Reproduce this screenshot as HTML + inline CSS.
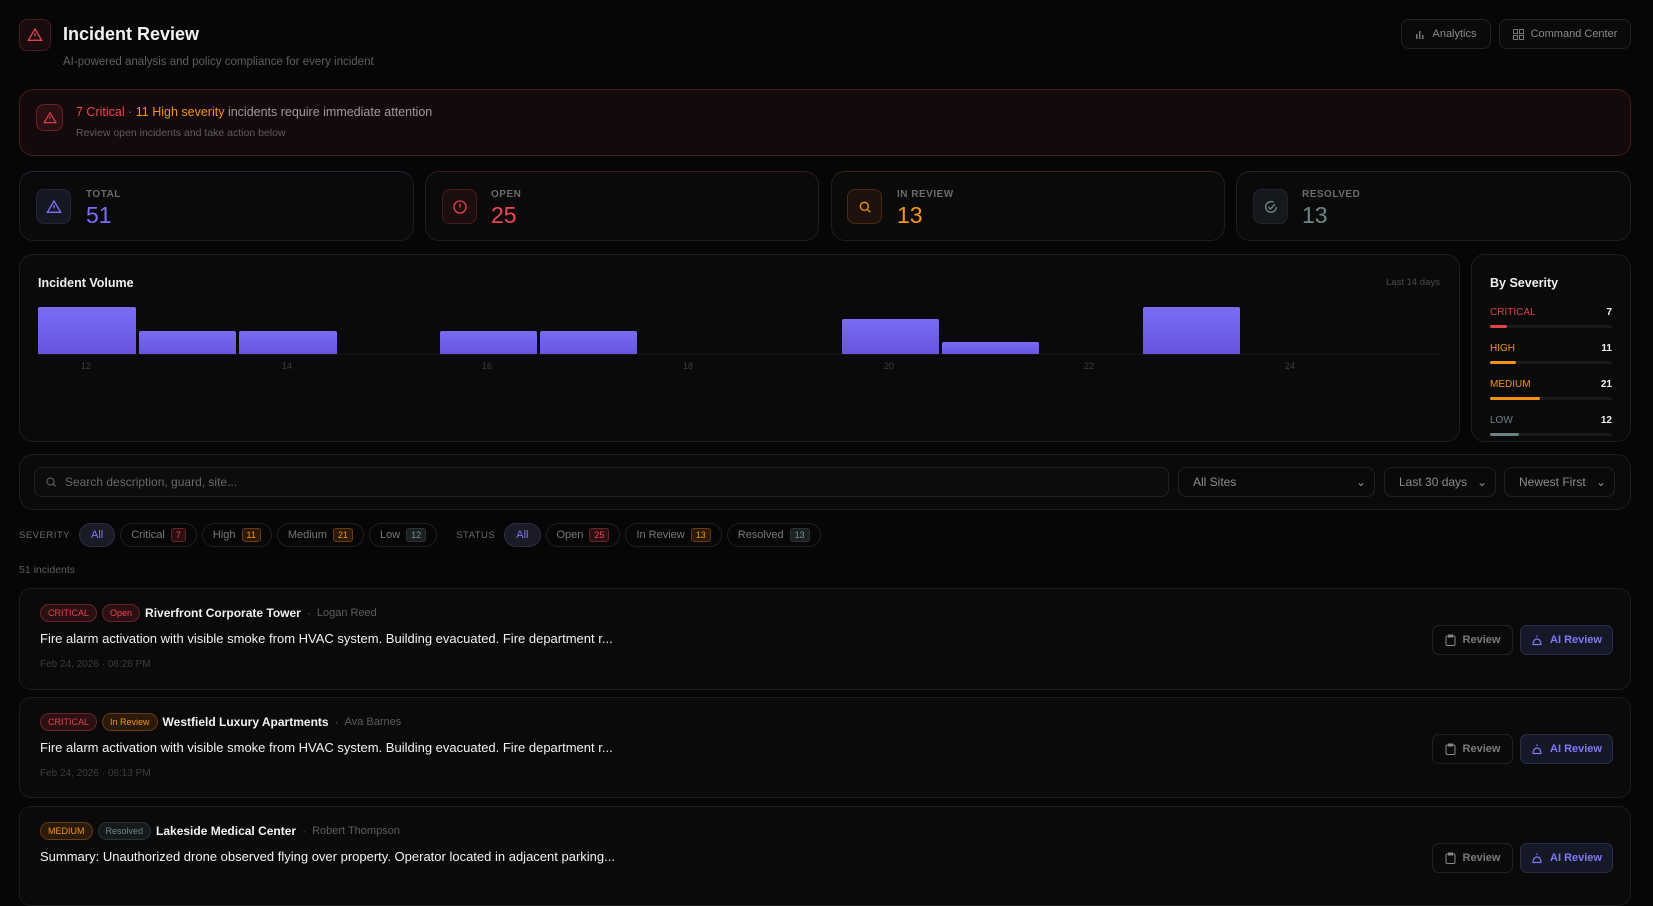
<!DOCTYPE html>
<html><head><meta charset="utf-8"><style>
*{box-sizing:border-box;margin:0;padding:0}
body{width:1653px;height:862px;overflow:hidden;background:#060606;font-family:"Liberation Sans",sans-serif;color:#e5e5e5;position:relative}
.a{position:absolute}
.card{position:absolute;border:1px solid #1e1e20;border-radius:14px;background:#0a0a0b}
.ib{position:absolute;border-radius:8px;display:flex;align-items:center;justify-content:center}
.btn{position:absolute;border:1px solid #222;border-radius:8px;display:flex;align-items:center;justify-content:center;gap:7px;font-size:11px;color:#8a8a8e;background:#0a0a0a}
.lbl{font-size:10px;font-weight:bold;color:#6b6b70;letter-spacing:.5px}
.num{font-size:23px;line-height:24px}
.bar{position:absolute;bottom:0;background:linear-gradient(#7a6cf5,#6655dd);border-radius:2px 2px 0 0}
.chip{display:inline-flex;align-items:center;gap:6px;height:24px;padding:0 10px;border:1px solid #1f1f22;border-radius:12px;font-size:11px;color:#77777c}
.cnt{font-size:9px;padding:1px 4px;border-radius:3px;border:1px solid}
.sel{position:absolute;top:467px;height:30px;border:1px solid #222;border-radius:8px;font-size:12px;color:#8c8c90;display:flex;align-items:center;justify-content:space-between;padding:0 8px 0 14px}
.badge{display:inline-block;font-size:9px;padding:3px 7px;border-radius:10px;border:1px solid;margin-right:5px}
.inc{position:absolute;left:19px;width:1612px;border:1px solid #1c1c1e;border-radius:12px;background:#0a0a0b}
.inc .t{position:absolute;left:20px;top:15px;display:flex;align-items:center;font-size:12px}
.inc .d{position:absolute;left:20px;top:42px;font-size:13px;color:#f2f2f2}
.inc .dt{position:absolute;left:20px;top:70px;font-size:10px;color:#3c3c40}
.rv{position:absolute;top:36px;height:30px;border-radius:7px;display:flex;align-items:center;justify-content:center;gap:7px;font-size:11px;font-weight:bold}
</style></head><body>
<div class="ib" style="left:19px;top:19px;width:32px;height:32px;border:1px solid #4a1a1e;background:#1a0c0e">
<svg width="16" height="16" viewBox="0 0 24 24" fill="none" stroke="#e0434f" stroke-width="2"><path d="M12 3L2 20h20z"/><path d="M12 9v5M12 17v.5"/></svg></div>
<div class="a" style="left:63px;top:24px;font-size:18px;font-weight:bold;color:#f3f3f3">Incident Review</div>
<div class="a" style="left:63px;top:56px;font-size:11.5px;color:#5e5e63">AI-powered analysis and policy compliance for every incident</div>
<div class="btn" style="left:1401px;top:19px;width:90px;height:30px">
<svg width="10" height="10" viewBox="0 0 10 10" fill="#777"><rect x="1" y="5" width="1.5" height="5"/><rect x="4" y="2" width="1.5" height="8"/><rect x="7" y="6" width="1.5" height="4"/></svg>Analytics</div>
<div class="btn" style="left:1499px;top:19px;width:132px;height:30px">
<svg width="11" height="11" viewBox="0 0 11 11" fill="none" stroke="#777"><rect x=".5" y=".5" width="4" height="4"/><rect x="6.5" y=".5" width="4" height="4"/><rect x=".5" y="6.5" width="4" height="4"/><rect x="6.5" y="6.5" width="4" height="4"/></svg>Command Center</div>

<div class="a" style="left:19px;top:89px;width:1612px;height:67px;border:1px solid #4a1a1e;border-radius:14px;background:#140a0b"></div>
<div class="ib" style="left:36px;top:104px;width:27px;height:27px;border:1px solid #6a2228;background:#2a1012">
<svg width="14" height="14" viewBox="0 0 24 24" fill="none" stroke="#e0434f" stroke-width="2"><path d="M12 3L2 20h20z"/><path d="M12 9v5M12 17v.5"/></svg></div>
<div class="a" style="left:76px;top:105px;font-size:12.5px;color:#9a9a9e"><span style="color:#ef4652">7 Critical</span> <span style="color:#777">·</span> <span style="color:#f59312">11 High severity</span> incidents require immediate attention</div>
<div class="a" style="left:76px;top:127px;font-size:10.5px;color:#5c5c60">Review open incidents and take action below</div>

<div class="card" style="left:19px;top:171px;width:395px;height:70px;border-top-color:#26283a"></div>
<div class="ib" style="left:36px;top:189px;width:35px;height:35px;background:#151722;border:1px solid #23263a"><svg width="16" height="16" viewBox="0 0 24 24" fill="none" stroke="#7d6ff5" stroke-width="2"><path d="M12 3L2 20h20z"/><path d="M12 9v5M12 17v.5"/></svg></div>
<div class="a lbl" style="left:86px;top:189px">TOTAL</div><div class="a num" style="left:86px;top:203px;color:#7b6cf6">51</div>
<div class="card" style="left:425px;top:171px;width:394px;height:70px;border-top-color:#3a1a1c"></div>
<div class="ib" style="left:442px;top:189px;width:35px;height:35px;background:#1c0d0f;border:1px solid #4a1a1e"><svg width="16" height="16" viewBox="0 0 24 24" fill="none" stroke="#e0434f" stroke-width="2"><circle cx="12" cy="12" r="9"/><path d="M12 7v6M12 16v.5"/></svg></div>
<div class="a lbl" style="left:491px;top:189px">OPEN</div><div class="a num" style="left:491px;top:203px;color:#ef4652">25</div>
<div class="card" style="left:831px;top:171px;width:394px;height:70px;border-top-color:#3a2314"></div>
<div class="ib" style="left:847px;top:189px;width:35px;height:35px;background:#1c120b;border:1px solid #4a2a14"><svg width="16" height="16" viewBox="0 0 24 24" fill="none" stroke="#f59312" stroke-width="2"><circle cx="11" cy="11" r="6"/><path d="M16 16l4 4"/></svg></div>
<div class="a lbl" style="left:897px;top:189px">IN REVIEW</div><div class="a num" style="left:897px;top:203px;color:#f59312">13</div>
<div class="card" style="left:1236px;top:171px;width:395px;height:70px;border-top-color:#22262e"></div>
<div class="ib" style="left:1253px;top:189px;width:35px;height:35px;background:#15181c;border:1px solid #20242a"><svg width="16" height="16" viewBox="0 0 24 24" fill="none" stroke="#6e8a88" stroke-width="2"><path d="M20 12a8 8 0 1 1-4-7"/><path d="M8 12l3 3 7-7"/></svg></div>
<div class="a lbl" style="left:1302px;top:189px">RESOLVED</div><div class="a num" style="left:1302px;top:203px;color:#6f8583">13</div>

<div class="card" style="left:19px;top:254px;width:1441px;height:188px"></div>
<div class="a" style="left:38px;top:276px;font-size:12.5px;font-weight:bold;color:#efefef">Incident Volume</div>
<div class="a" style="left:1386px;top:277px;font-size:9.5px;color:#4c4c50">Last 14 days</div>
<div class="a" style="left:38px;top:308px;width:1404px;height:47px;border-bottom:1px solid #1a1212">
<div class="bar" style="left:0;width:98px;height:47px"></div>
<div class="bar" style="left:101px;width:97px;height:23px"></div>
<div class="bar" style="left:201px;width:98px;height:23px"></div>
<div class="bar" style="left:402px;width:97px;height:23px"></div>
<div class="bar" style="left:502px;width:97px;height:23px"></div>
<div class="bar" style="left:804px;width:97px;height:35px"></div>
<div class="bar" style="left:904px;width:97px;height:12px"></div>
<div class="bar" style="left:1105px;width:97px;height:47px"></div>
</div>
<div class="a" style="left:38px;top:361px;width:1404px;font-size:9px;color:#3e3e42">
<span class="a" style="left:43px">12</span><span class="a" style="left:244px">14</span><span class="a" style="left:444px">16</span><span class="a" style="left:645px">18</span><span class="a" style="left:846px">20</span><span class="a" style="left:1046px">22</span><span class="a" style="left:1247px">24</span></div>

<div class="card" style="left:1471px;top:254px;width:160px;height:188px"></div>
<div class="a" style="left:1490px;top:276px;font-size:12.5px;font-weight:bold;color:#efefef">By Severity</div>
<div class="a" style="left:1490px;top:307px;width:122px;font-size:10px">
<div style="display:flex;justify-content:space-between"><span style="color:#e0434f">CRITICAL</span><b style="color:#eee">7</b></div>
<div style="height:3px;background:#1a1a1c;margin-top:7px;border-radius:2px"><div style="width:17px;height:3px;background:#e0434f;border-radius:2px"></div></div>
<div style="display:flex;justify-content:space-between;margin-top:15px"><span style="color:#f59312">HIGH</span><b style="color:#eee">11</b></div>
<div style="height:3px;background:#1a1a1c;margin-top:7px;border-radius:2px"><div style="width:26px;height:3px;background:#f59312;border-radius:2px"></div></div>
<div style="display:flex;justify-content:space-between;margin-top:15px"><span style="color:#f59312">MEDIUM</span><b style="color:#eee">21</b></div>
<div style="height:3px;background:#1a1a1c;margin-top:7px;border-radius:2px"><div style="width:50px;height:3px;background:#f59312;border-radius:2px"></div></div>
<div style="display:flex;justify-content:space-between;margin-top:15px"><span style="color:#6b8280">LOW</span><b style="color:#eee">12</b></div>
<div style="height:3px;background:#1a1a1c;margin-top:7px;border-radius:2px"><div style="width:29px;height:3px;background:#6b8280;border-radius:2px"></div></div>
</div>

<div class="card" style="left:19px;top:454px;width:1612px;height:56px"></div>
<div class="a" style="left:34px;top:467px;width:1135px;height:30px;border:1px solid #222;border-radius:8px;background:#0c0c0d;display:flex;align-items:center;padding-left:10px;gap:8px;font-size:12px;color:#68686c">
<svg width="12" height="12" viewBox="0 0 24 24" fill="none" stroke="#666" stroke-width="2"><circle cx="11" cy="11" r="7"/><path d="M16 16l5 5"/></svg>Search description, guard, site...</div>
<div class="sel" style="left:1178px;width:197px">All Sites<span>⌄</span></div>
<div class="sel" style="left:1384px;width:112px">Last 30 days<span>⌄</span></div>
<div class="sel" style="left:1504px;width:111px">Newest First<span>⌄</span></div>

<div class="a" style="left:19px;top:523px;display:flex;align-items:center;gap:5px">
<span class="lbl" style="font-weight:normal;font-size:9.5px;margin-right:4px">SEVERITY</span>
<span class="chip" style="background:#1a1b26;border-color:#2c2e44;color:#8277f5;padding:0 11px">All</span>
<span class="chip">Critical <span class="cnt" style="color:#e0434f;border-color:#6a2228;background:#2a1012">7</span></span>
<span class="chip">High <span class="cnt" style="color:#f59312;border-color:#6a3a14;background:#2a1a0a">11</span></span>
<span class="chip">Medium <span class="cnt" style="color:#f59312;border-color:#6a3a14;background:#2a1a0a">21</span></span>
<span class="chip">Low <span class="cnt" style="color:#7a9290;border-color:#2a3236;background:#1a2024">12</span></span>
<span class="lbl" style="font-weight:normal;font-size:9.5px;margin:0 4px 0 14px">STATUS</span>
<span class="chip" style="background:#1a1b26;border-color:#2c2e44;color:#8277f5;padding:0 11px">All</span>
<span class="chip">Open <span class="cnt" style="color:#ef4652;border-color:#6a2228;background:#2a1012">25</span></span>
<span class="chip">In Review <span class="cnt" style="color:#f59312;border-color:#6a3a14;background:#2a1a0a">13</span></span>
<span class="chip">Resolved <span class="cnt" style="color:#7a9290;border-color:#2a3236;background:#1a2024">13</span></span>
</div>
<div class="a" style="left:19px;top:564px;font-size:10.5px;color:#5c5c60">51 incidents</div>

<div class="inc" style="top:588px;height:102px">
<div class="t"><span class="badge" style="color:#e0434f;border-color:#6a2228;background:#2a1012">CRITICAL</span><span class="badge" style="color:#ef4652;border-color:#6a2228;background:#2a1012">Open</span><b style="color:#f2f2f2">Riverfront Corporate Tower</b><span style="color:#555;margin:0 6px">·</span><span style="color:#5c5c60;font-size:11px">Logan Reed</span></div>
<div class="d">Fire alarm activation with visible smoke from HVAC system. Building evacuated. Fire department r...</div>
<div class="dt">Feb 24, 2026 · 06:26 PM</div>
<div class="rv" style="left:1412px;width:81px;border:1px solid #222;color:#7a7a7e"><svg width="11" height="12" viewBox="0 0 11 12" fill="none" stroke="#888"><rect x="1" y="2" width="9" height="9.5" rx="1.5"/><path d="M3.5 1h4v2h-4z"/></svg>Review</div>
<div class="rv" style="left:1500px;width:93px;border:1px solid #2a2e44;background:#151826;color:#8277f5"><svg width="12" height="12" viewBox="0 0 12 12" fill="none" stroke="#8277f5" stroke-width="1.2"><path d="M6 1.5v1.5M2 10.5c0-3 1.5-5.5 4-5.5s4 2.5 4 5.5z"/></svg>AI Review</div>
</div>
<div class="inc" style="top:697px;height:101px">
<div class="t"><span class="badge" style="color:#e0434f;border-color:#6a2228;background:#2a1012">CRITICAL</span><span class="badge" style="color:#f59312;border-color:#6a3a14;background:#2a1a0a">In Review</span><b style="color:#f2f2f2">Westfield Luxury Apartments</b><span style="color:#555;margin:0 6px">·</span><span style="color:#5c5c60;font-size:11px">Ava Barnes</span></div>
<div class="d">Fire alarm activation with visible smoke from HVAC system. Building evacuated. Fire department r...</div>
<div class="dt">Feb 24, 2026 · 06:13 PM</div>
<div class="rv" style="left:1412px;width:81px;border:1px solid #222;color:#7a7a7e"><svg width="11" height="12" viewBox="0 0 11 12" fill="none" stroke="#888"><rect x="1" y="2" width="9" height="9.5" rx="1.5"/><path d="M3.5 1h4v2h-4z"/></svg>Review</div>
<div class="rv" style="left:1500px;width:93px;border:1px solid #2a2e44;background:#151826;color:#8277f5"><svg width="12" height="12" viewBox="0 0 12 12" fill="none" stroke="#8277f5" stroke-width="1.2"><path d="M6 1.5v1.5M2 10.5c0-3 1.5-5.5 4-5.5s4 2.5 4 5.5z"/></svg>AI Review</div>
</div>
<div class="inc" style="top:806px;height:100px">
<div class="t"><span class="badge" style="color:#f59312;border-color:#6a3a14;background:#2a1a0a">MEDIUM</span><span class="badge" style="color:#6f8583;border-color:#2a3236;background:#151a1e">Resolved</span><b style="color:#f2f2f2">Lakeside Medical Center</b><span style="color:#555;margin:0 6px">·</span><span style="color:#5c5c60;font-size:11px">Robert Thompson</span></div>
<div class="d">Summary: Unauthorized drone observed flying over property. Operator located in adjacent parking...</div>
<div class="rv" style="left:1412px;width:81px;border:1px solid #222;color:#7a7a7e"><svg width="11" height="12" viewBox="0 0 11 12" fill="none" stroke="#888"><rect x="1" y="2" width="9" height="9.5" rx="1.5"/><path d="M3.5 1h4v2h-4z"/></svg>Review</div>
<div class="rv" style="left:1500px;width:93px;border:1px solid #2a2e44;background:#151826;color:#8277f5"><svg width="12" height="12" viewBox="0 0 12 12" fill="none" stroke="#8277f5" stroke-width="1.2"><path d="M6 1.5v1.5M2 10.5c0-3 1.5-5.5 4-5.5s4 2.5 4 5.5z"/></svg>AI Review</div>
</div>
</body></html>
